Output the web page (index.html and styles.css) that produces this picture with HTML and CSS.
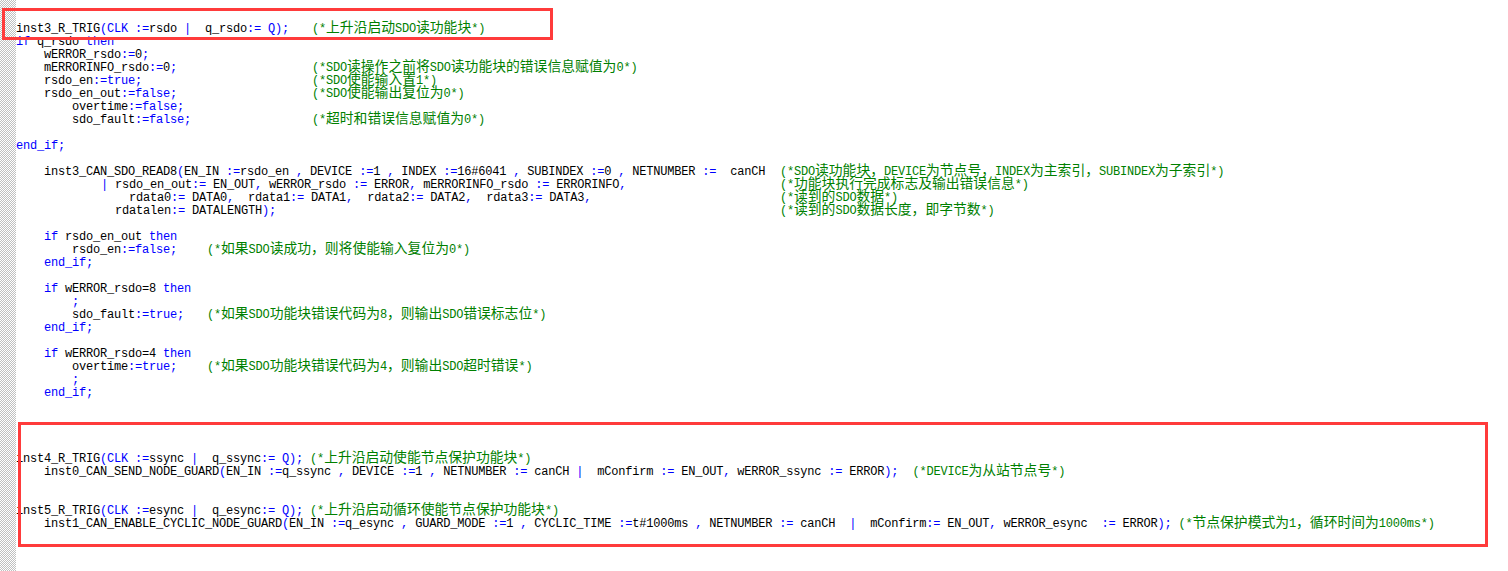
FILE: index.html
```html
<!DOCTYPE html>
<html lang="zh">
<head>
<meta charset="utf-8">
<title>ST code</title>
<link rel="stylesheet" href="styles.css">
</head>
<body>
<div class="editor">
<div class="gutter"></div>
<div class="code">
<div class="l"><span class="w296">inst3_R_TRIG<b>(CLK :=</b>rsdo <b>|</b>  q_rsdo<b>:= Q);</b></span><i>(*<u>上升沿启动</u>SDO<u>读功能块</u>*)</i></div>
<div class="l"><b>if</b> q_rsdo <b>then</b></div>
<div class="l in1">wERROR_rsdo<b>:=</b>0<b>;</b></div>
<div class="l in1"><span class="w268">mERRORINFO_rsdo<b>:=</b>0<b>;</b></span><i>(*SDO<u>读操作之前将</u>SDO<u>读功能块的错误信息赋值为</u>0*)</i></div>
<div class="l in1"><span class="w268">rsdo_en<b>:=true;</b></span><i>(*SDO<u>使能输入置</u>1*)</i></div>
<div class="l in1"><span class="w268">rsdo_en_out<b>:=false;</b></span><i>(*SDO<u>使能输出复位为</u>0*)</i></div>
<div class="l in2">overtime<b>:=false;</b></div>
<div class="l in2"><span class="w240">sdo_fault<b>:=false;</b></span><i>(*<u>超时和错误信息赋值为</u>0*)</i></div>
<div class="l"> </div>
<div class="l"><b>end_if;</b></div>
<div class="l"> </div>
<div class="l in1"><span class="w736">inst3_CAN_SDO_READ8<b>(</b>EN_IN <b>:=</b>rsdo_en <b>,</b> DEVICE <b>:=</b>1 <b>,</b> INDEX <b>:=</b>16#6041 <b>,</b> SUBINDEX <b>:=</b>0 <b>,</b> NETNUMBER <b>:=</b>  canCH</span><i>(*SDO<u>读功能块，</u>DEVICE<u>为节点号，</u>INDEX<u>为主索引，</u>SUBINDEX<u>为子索引</u>*)</i></div>
<div class="l in3"><span class="w695"><b>|</b> rsdo_en_out<b>:=</b> EN_OUT<b>,</b> wERROR_rsdo <b>:=</b> ERROR<b>,</b> mERRORINFO_rsdo <b>:=</b> ERRORINFO<b>,</b></span><i>(*<u>功能块执行完成标志及输出错误信息</u>*)</i></div>
<div class="l in5"><span class="w651">rdata0<b>:=</b> DATA0<b>,</b>  rdata1<b>:=</b> DATA1<b>,</b>  rdata2<b>:=</b> DATA2<b>,</b>  rdata3<b>:=</b> DATA3<b>,</b></span><i>(*<u>读到的</u>SDO<u>数据</u>*)</i></div>
<div class="l in4"><span class="w665">rdatalen<b>:=</b> DATALENGTH<b>);</b></span><i>(*<u>读到的</u>SDO<u>数据长度，即字节数</u>*)</i></div>
<div class="l"> </div>
<div class="l in1"><b>if</b> rsdo_en_out <b>then</b></div>
<div class="l in2"><span class="w135">rsdo_en<b>:=false;</b></span><i>(*<u>如果</u>SDO<u>读成功，则将使能输入复位为</u>0*)</i></div>
<div class="l in1"><b>end_if;</b></div>
<div class="l"> </div>
<div class="l in1"><b>if</b> wERROR_rsdo=8 <b>then</b></div>
<div class="l in2"><b>;</b></div>
<div class="l in2"><span class="w135">sdo_fault<b>:=true;</b></span><i>(*<u>如果</u>SDO<u>功能块错误代码为</u>8<u>，则输出</u>SDO<u>错误标志位</u>*)</i></div>
<div class="l in1"><b>end_if;</b></div>
<div class="l"> </div>
<div class="l in1"><b>if</b> wERROR_rsdo=4 <b>then</b></div>
<div class="l in2"><span class="w135">overtime<b>:=true;</b></span><i>(*<u>如果</u>SDO<u>功能块错误代码为</u>4<u>，则输出</u>SDO<u>超时错误</u>*)</i></div>
<div class="l in2"><b>;</b></div>
<div class="l in1"><b>end_if;</b></div>
<div class="l"> </div>
<div class="l"> </div>
<div class="l"> </div>
<div class="l"> </div>
<div class="l">inst4_R_TRIG<b>(CLK :=</b>ssync <b>|</b>  q_ssync<b>:= Q);</b> <i>(*<u>上升沿启动使能节点保护功能块</u>*)</i></div>
<div class="l in1">inst0_CAN_SEND_NODE_GUARD<b>(</b>EN_IN <b>:=</b>q_ssync <b>,</b> DEVICE <b>:=</b>1 <b>,</b> NETNUMBER <b>:=</b> canCH <b>|</b>  mConfirm <b>:=</b> EN_OUT<b>,</b> wERROR_ssync <b>:=</b> ERROR<b>);</b>  <i>(*DEVICE<u>为从站节点号</u>*)</i></div>
<div class="l"> </div>
<div class="l"> </div>
<div class="l">inst5_R_TRIG<b>(CLK :=</b>esync <b>|</b>  q_esync<b>:= Q);</b> <i>(*<u>上升沿启动循环使能节点保护功能块</u>*)</i></div>
<div class="l in1">inst1_CAN_ENABLE_CYCLIC_NODE_GUARD<b>(</b>EN_IN <b>:=</b>q_esync <b>,</b> GUARD_MODE <b>:=</b>1 <b>,</b> CYCLIC_TIME <b>:=</b>t#1000ms <b>,</b> NETNUMBER <b>:=</b> canCH  <b>|</b>  mConfirm<b>:=</b> EN_OUT<b>,</b> wERROR_esync  <b>:=</b> ERROR<b>);</b> <i>(*<u>节点保护模式为</u>1<u>，循环时间为</u>1000ms*)</i></div>
</div>
<div class="mark mark-top"></div>
<div class="mark mark-bottom"></div>
</div>
</body>
</html>
```

FILE: styles.css
```css
html, body { margin: 0; padding: 0; background: #fff; overflow: hidden; }
.editor { position: relative; display: flex; height: 571px; overflow: hidden; }
.gutter {
  flex: 0 0 16px;
  background-color: #fff;
  background-image: conic-gradient(#c0c0c0 25%, #fff 0 50%, #c0c0c0 0 75%, #fff 0);
  background-size: 2px 2px;
}
.code {
  flex: 1;
  padding-top: 23px;
  font: 12px/13.03px "Liberation Mono", "Noto Sans CJK SC", monospace;
  letter-spacing: -0.2px;
  color: #000;
}
.l { height: 13.03px; white-space: pre; }
b { font-weight: normal; color: #00f; }
i { font-style: normal; color: #008000; }
u { text-decoration: none; font-size: 13.8px; letter-spacing: 0; font-family: "Noto Sans CJK SC", sans-serif; line-height: 0; }
.in1 { padding-left: 28px; }
.in2 { padding-left: 56px; }
.in3 { padding-left: 85px; }
.in4 { padding-left: 99px; }
.in5 { padding-left: 113px; }
.l span { display: inline-block; }
.w135 { width: 135px; }
.w240 { width: 240px; }
.w268 { width: 268px; }
.w296 { width: 296px; }
.w651 { width: 651px; }
.w665 { width: 665px; }
.w695 { width: 679px; }
.w736 { width: 736px; }
.mark { position: absolute; border: 3px solid #ff3b3b; box-sizing: border-box; }
.mark-top { left: 2px; top: 8px; width: 551px; height: 32px; }
.mark-bottom { left: 18px; top: 422px; width: 1470px; height: 125px; }
```
